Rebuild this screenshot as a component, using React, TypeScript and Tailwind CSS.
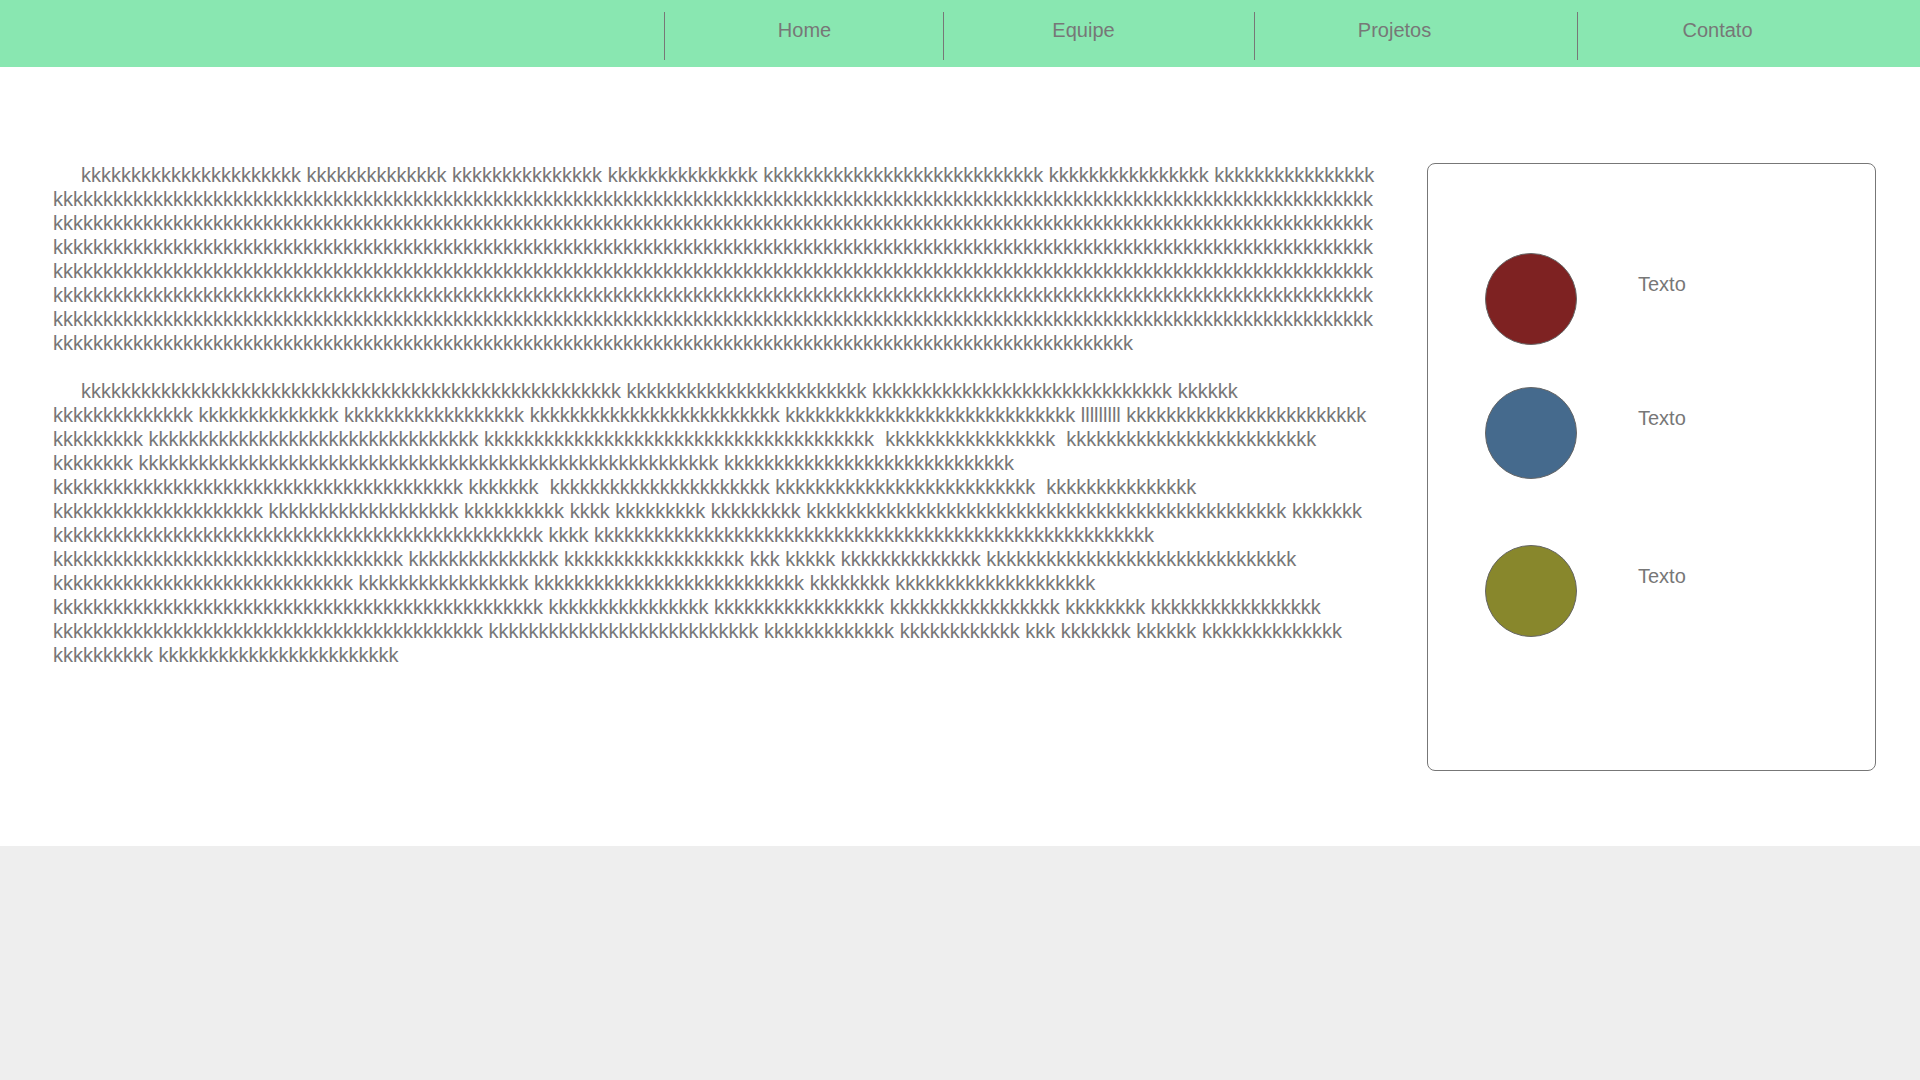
const k = (n: number) => "k".repeat(n);
const words = (counts: number[]) => counts.map(k).join(" ");
const gap = "\u00a0 ";

const navItems = [
  { label: "Home", width: "w-[279px]" },
  { label: "Equipe", width: "w-[311px]" },
  { label: "Projetos", width: "w-[323px]" },
  { label: "Contato", width: "flex-1" },
];

const firstParagraph = `${words([22, 14, 15, 15, 28, 16, 16])} ${k(900)}`;

const secondParagraph = [
  words([54, 24, 30, 6]),
  `${words([14, 14, 18, 25, 29])} ${"l".repeat(9)} ${k(24)}`,
  `${words([9, 33, 39])}${gap}${k(17)}${gap}${k(25)}`,
  words([8, 58, 29]),
  `${words([41, 7])}${gap}${words([22, 26])}${gap}${k(15)}`,
  words([21, 19, 10, 4, 9, 9, 48, 7]),
  words([49, 4, 56]),
  words([35, 15, 18, 3, 5, 14, 31]),
  words([30, 17, 27, 8, 20]),
  words([49, 16, 17, 17, 8, 17]),
  words([43, 27, 13, 12, 3, 7, 6, 14]),
  words([10, 24]),
].join(" ");

const team = [
  { color: "bg-[#7e2222]", spacing: "mb-[42px]" },
  { color: "bg-[#456a8d]", spacing: "mb-[66px]" },
  { color: "bg-[#88872c]", spacing: "" },
];

export default function App() {
  return (
    <div className="flex min-h-screen flex-col bg-[#eeeeee] font-['Liberation_Sans',Arial,sans-serif] text-[20px] leading-6 text-[#777777]">
      <header className="flex h-[67px] bg-[#89e7b1] pl-[664px]">
        {navItems.map((item) => (
          <div
            key={item.label}
            className={`${item.width} mt-3 h-12 border-l border-[#777777]`}
          >
            <a className="block w-[279px] pt-[6px] text-center">{item.label}</a>
          </div>
        ))}
      </header>

      <main className="flex gap-[46px] bg-white pt-[96px] pb-[75px] pl-[53px]">
        <div className="w-[1328px] [overflow-wrap:break-word]">
          <p className="mb-6 indent-[28px]">{firstParagraph}</p>
          <p className="indent-[28px]">{secondParagraph}</p>
        </div>

        <aside className="h-[608px] w-[449px] rounded-[8px] border border-[#777777] pt-[89px] pl-[57px]">
          {team.map((member, i) => (
            <div key={i} className={`flex items-start gap-[61px] ${member.spacing}`}>
              <div
                className={`size-[92px] shrink-0 rounded-full border border-[#666666] ${member.color}`}
              />
              <span className="mt-[19px]">Texto</span>
            </div>
          ))}
        </aside>
      </main>

      <footer className="flex-1" />
    </div>
  );
}
